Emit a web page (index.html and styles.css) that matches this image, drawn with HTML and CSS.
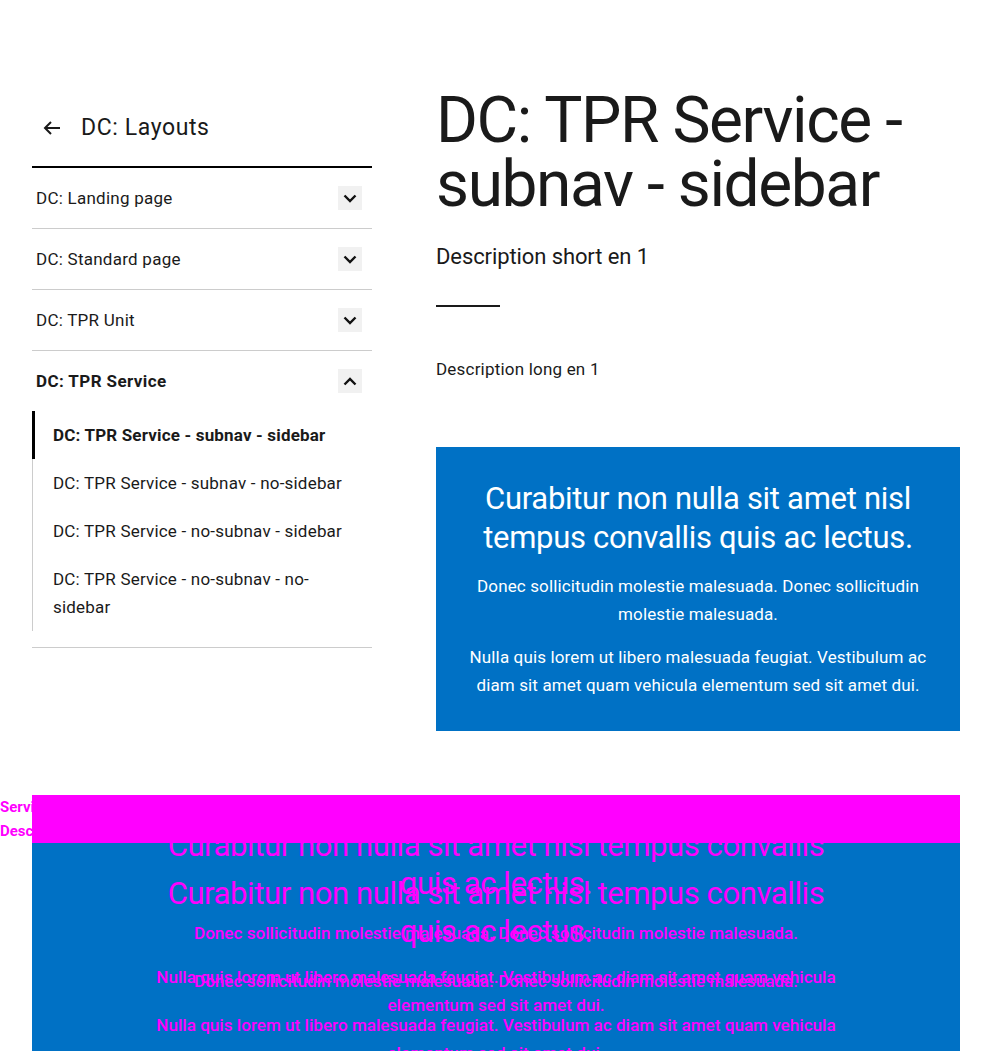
FILE: index.html
```html
<!DOCTYPE html>
<html lang="en">
<head>
<meta charset="utf-8">
<title>DC: TPR Service - subnav - sidebar</title>
<link rel="stylesheet" href="styles.css">
</head>
<body>
<div class="page">
  <aside class="nav">
    <div class="nav-head">
      <a class="back" href="#" aria-label="Back">
        <svg width="20" height="16" viewBox="0 0 20 16"><path d="M18 8H3M9 2L3 8l6 6" fill="none" stroke="#1a1a1a" stroke-width="2"/></svg>
      </a>
      <span class="nav-title">DC: Layouts</span>
    </div>
    <ul class="nav-list">
      <li class="nav-item"><span>DC: Landing page</span><span class="chev"><svg width="14" height="9" viewBox="0 0 14 9"><path d="M1.5 1.5L7 7l5.5-5.5" fill="none" stroke="#111" stroke-width="2.4"/></svg></span></li>
      <li class="nav-item"><span>DC: Standard page</span><span class="chev"><svg width="14" height="9" viewBox="0 0 14 9"><path d="M1.5 1.5L7 7l5.5-5.5" fill="none" stroke="#111" stroke-width="2.4"/></svg></span></li>
      <li class="nav-item"><span>DC: TPR Unit</span><span class="chev"><svg width="14" height="9" viewBox="0 0 14 9"><path d="M1.5 1.5L7 7l5.5-5.5" fill="none" stroke="#111" stroke-width="2.4"/></svg></span></li>
      <li class="nav-group">
        <div class="nav-item open"><span>DC: TPR Service</span><span class="chev"><svg width="14" height="9" viewBox="0 0 14 9"><path d="M1.5 7.5L7 2l5.5 5.5" fill="none" stroke="#111" stroke-width="2.4"/></svg></span></div>
        <ul class="sub-list">
          <li class="sub-item active">DC: TPR Service - subnav - sidebar</li>
          <li class="sub-item">DC: TPR Service - subnav - no-sidebar</li>
          <li class="sub-item">DC: TPR Service - no-subnav - sidebar</li>
          <li class="sub-item">DC: TPR Service - no-subnav - no-sidebar</li>
        </ul>
      </li>
    </ul>
  </aside>
  <main class="content">
    <h1 class="title">DC: TPR Service - subnav - sidebar</h1>
    <p class="lead">Description short en 1</p>
    <hr class="short-rule">
    <p class="body-text">Description long en 1</p>
    <section class="promo">
      <h2 class="promo-title">Curabitur non nulla sit amet nisl tempus convallis quis ac lectus.</h2>
      <p class="promo-text">Donec sollicitudin molestie malesuada. Donec sollicitudin molestie malesuada.</p>
      <p class="promo-text">Nulla quis lorem ut libero malesuada feugiat. Vestibulum ac diam sit amet quam vehicula elementum sed sit amet dui.</p>
    </section>
  </main>
</div>
<section class="banner">
  <div class="stray-labels">
    <span class="stray">Service</span>
    <span class="stray">Description</span>
  </div>
  <div class="banner-bar"></div>
  <div class="banner-body">
    <div class="banner-inner">
      <h2 class="banner-title">Curabitur non nulla sit amet nisl tempus convallis quis ac lectus.</h2>
      <p class="banner-text">Donec sollicitudin molestie malesuada. Donec sollicitudin molestie malesuada.</p>
      <p class="banner-text">Nulla quis lorem ut libero malesuada feugiat. Vestibulum ac diam sit amet quam vehicula elementum sed sit amet dui.</p>
    </div>
  </div>
  <div class="banner-ghost">
    <div class="banner-inner">
      <h2 class="banner-title">Curabitur non nulla sit amet nisl tempus convallis quis ac lectus.</h2>
      <p class="banner-text">Donec sollicitudin molestie malesuada. Donec sollicitudin molestie malesuada.</p>
      <p class="banner-text">Nulla quis lorem ut libero malesuada feugiat. Vestibulum ac diam sit amet quam vehicula elementum sed sit amet dui.</p>
    </div>
  </div>
</section>
</body>
</html>
```

FILE: styles.css
```css
* { box-sizing: border-box; }
html, body { margin: 0; padding: 0; }
body {
  font-family: Roboto, "Liberation Sans", sans-serif;
  color: #1a1a1a;
  background: #fff;
  overflow: hidden;
  height: 1051px;
}
.page {
  display: grid;
  grid-template-columns: 340px 524px;
  column-gap: 64px;
  padding: 89px 32px 0;
}
/* nav */
.nav-head {
  height: 79px;
  display: flex;
  align-items: center;
  border-bottom: 2px solid #000;
}
.back {
  width: 40px;
  display: flex;
  justify-content: center;
  align-items: center;
}
.nav-title {
  margin-left: 9px;
  font-size: 23px;
  letter-spacing: 0.6px;
}
.nav-list, .sub-list {
  list-style: none;
  margin: 0;
  padding: 0;
}
.nav-item {
  height: 61px;
  border-bottom: 1px solid #cccccc;
  display: flex;
  align-items: center;
  justify-content: space-between;
  padding: 0 10px 0 4px;
  font-size: 17px;
  letter-spacing: 0.25px;
}
.nav-item.open {
  border-bottom: 0;
  height: 60px;
  font-weight: 700;
  letter-spacing: 0.4px;
}
.chev {
  width: 24px;
  height: 24px;
  background: #f1f1f1;
  display: flex;
  align-items: center;
  justify-content: center;
}
.nav-group {
  border-bottom: 1px solid #cccccc;
  padding-bottom: 16px;
}
.sub-list {
  border-left: 1px solid #cccccc;
}
.sub-item {
  padding: 10px 14px 10px 20px;
  font-size: 17px;
  line-height: 28px;
  letter-spacing: 0.2px;
}
.sub-item.active {
  margin-left: -1px;
  border-left: 3px solid #000;
  padding-left: 18px;
  font-weight: 700;
  letter-spacing: 0.17px;
}
/* content */
.title {
  margin: 0;
  font-size: 64px;
  line-height: 64px;
  font-weight: 400;
  letter-spacing: -1.4px;
}
.lead {
  margin: 26px 0 0;
  font-size: 22px;
  line-height: 28px;
  letter-spacing: -0.1px;
}
.short-rule {
  width: 64px;
  height: 2px;
  border: 0;
  background: #1a1a1a;
  margin: 34px 0 0;
}
.body-text {
  margin: 48px 0 0;
  font-size: 17px;
  line-height: 28px;
  letter-spacing: 0.2px;
}
.promo {
  margin-top: 64px;
  background: #0071c5;
  color: #fff;
  padding: 32px 32px 32px;
  text-align: center;
}
.promo-title {
  margin: 0;
  font-size: 31px;
  line-height: 39px;
  font-weight: 400;
  letter-spacing: -0.3px;
}
.promo-text {
  margin: 15px 0 0;
  font-size: 17px;
  line-height: 28px;
  letter-spacing: 0.13px;
}
/* banner */
.banner {
  position: relative;
  margin: 64px 32px 0;
}
.banner-bar {
  height: 48px;
  background: #ff00ff;
}
.banner-body {
  background: #0071c5;
  height: 400px;
  padding-top: 32px;
}
.banner-inner {
  max-width: 700px;
  margin: 0 auto;
  text-align: center;
  color: #ff00ff;
}
.banner-title {
  margin: 0;
  font-size: 31px;
  line-height: 38px;
  font-weight: 400;
  letter-spacing: -0.4px;
}
.banner-text {
  margin: 16px 0 0;
  font-size: 17px;
  line-height: 28px;
  font-weight: 500;
  letter-spacing: 0.05px;
}
.banner-ghost {
  position: absolute;
  top: 32px;
  left: 0;
  right: 0;
}
.stray-labels {
  position: absolute;
  left: -32px;
  top: 0;
  display: flex;
  flex-direction: column;
  color: #ff00ff;
  font-size: 15px;
  font-weight: 700;
  line-height: 24px;
}
```
